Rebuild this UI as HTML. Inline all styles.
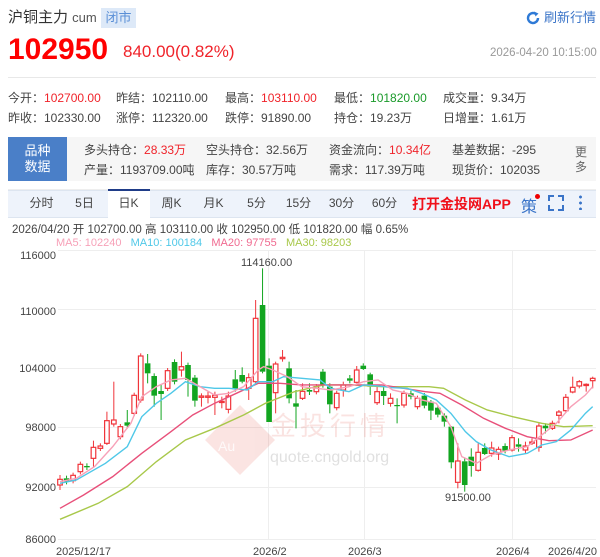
<!DOCTYPE html>
<html><head><meta charset="utf-8"><style>
*{margin:0;padding:0;box-sizing:border-box}
body{width:600px;height:557px;overflow:hidden;background:#fff;font-family:"Liberation Sans","Noto Sans CJK SC",sans-serif;color:#333;position:relative}
.a{position:absolute;white-space:nowrap}
.r{color:#f0232a}.g{color:#1a9a2a}
.s{font-size:12px;color:#444;line-height:14px}
.tab{position:absolute;top:190px;height:27px;line-height:27px;font-size:12px;color:#444;text-align:center;width:43px}
</style></head><body>
<div class="a" style="left:8px;top:9px;font-size:15px;color:#333;line-height:18px">沪铜主力 <span style="font-size:13px;color:#555">cum</span></div>
<div class="a" style="left:101px;top:8px;width:35px;height:20px;background:#dde9f8;color:#5a8fd6;font-size:13px;line-height:20px;text-align:center">闭市</div>
<svg class="a" style="left:526px;top:11px" width="14" height="14" viewBox="0 0 14 14"><path d="M12 7A5 5 0 1 1 9.5 2.7" fill="none" stroke="#2f7ad6" stroke-width="2.4"/><path d="M8 0.5L12.5 2.5 9.5 5.5Z" fill="#2f7ad6"/></svg>
<div class="a" style="left:544px;top:10px;font-size:13px;color:#3a74c8;line-height:16px">刷新行情</div>
<div class="a r" style="left:8px;top:33px;font-size:30px;line-height:34px;font-weight:bold;color:#f00">102950</div>
<div class="a r" style="left:123px;top:42px;font-size:17px;line-height:20px">840.00(0.82%)</div>
<div class="a" style="left:490px;top:46px;font-size:11.5px;line-height:14px;color:#999">2026-04-20 10:15:00</div>
<div class="a" style="left:8px;top:77px;width:588px;height:1px;background:#e8e8e8"></div>
<div class="a s" style="left:8px;top:91px">今开：<span class="r">102700.00</span></div>
<div class="a s" style="left:116px;top:91px">昨结：102110.00</div>
<div class="a s" style="left:225px;top:91px">最高：<span class="r">103110.00</span></div>
<div class="a s" style="left:334px;top:91px">最低：<span class="g">101820.00</span></div>
<div class="a s" style="left:443px;top:91px">成交量：9.34万</div>
<div class="a s" style="left:8px;top:111px">昨收：102330.00</div>
<div class="a s" style="left:116px;top:111px">涨停：112320.00</div>
<div class="a s" style="left:225px;top:111px">跌停：91890.00</div>
<div class="a s" style="left:334px;top:111px">持仓：19.23万</div>
<div class="a s" style="left:443px;top:111px">日增量：1.61万</div>
<div class="a" style="left:8px;top:137px;width:588px;height:44px;background:#f6f6f6"></div>
<div class="a" style="left:8px;top:137px;width:59px;height:44px;background:#4a7fc8;color:#fff;font-size:13px;text-align:center;line-height:16px;padding-top:6px;white-space:normal">品种<br>数据</div>
<div class="a s" style="left:84px;top:143px">多头持仓：<span class="r">28.33万</span></div>
<div class="a s" style="left:206px;top:143px">空头持仓：32.56万</div>
<div class="a s" style="left:329px;top:143px">资金流向：<span class="r">10.34亿</span></div>
<div class="a s" style="left:452px;top:143px">基差数据：-295</div>
<div class="a s" style="left:84px;top:163px">产量：1193709.00吨</div>
<div class="a s" style="left:206px;top:163px">库存：30.57万吨</div>
<div class="a s" style="left:329px;top:163px">需求：117.39万吨</div>
<div class="a s" style="left:452px;top:163px">现货价：102035</div>
<div class="a s" style="left:575px;top:145px;width:12px;white-space:normal;line-height:15px;color:#666">更多</div>
<div class="a" style="left:8px;top:189px;width:588px;height:1px;background:#eee"></div>
<div class="a" style="left:8px;top:190px;width:588px;height:28px;background:#eef3fb;border-top:1px solid #dde5f0;border-bottom:1px solid #dde5f0"></div>
<div class="a" style="left:108px;top:189px;width:42px;height:29px;background:#fff;border-top:2px solid #1f3c88"></div>
<div class="tab" style="left:20px">分时</div><div class="tab" style="left:63px">5日</div><div class="tab" style="left:107px">日K</div><div class="tab" style="left:150px">周K</div><div class="tab" style="left:192px">月K</div><div class="tab" style="left:235px">5分</div><div class="tab" style="left:277px">15分</div><div class="tab" style="left:320px">30分</div><div class="tab" style="left:363px">60分</div>
<div class="a" style="left:412px;top:194px;font-size:14px;font-weight:bold;color:#f0101a">打开金投网APP</div>
<div class="a" style="left:521px;top:193px;font-size:16px;color:#3a74c8">策</div>
<div class="a" style="left:535px;top:194px;width:5px;height:5px;border-radius:50%;background:#e00"></div>
<svg class="a" style="left:548px;top:195px" width="16" height="16" viewBox="0 0 16 16" fill="none" stroke="#3a74c8" stroke-width="2"><path d="M1 6V1H6M10 1H15V6M15 10V15H10M6 15H1V10"/></svg>
<div class="a" style="left:579px;top:194px;width:3px;height:16px;background:radial-gradient(circle,#3a74c8 1.3px,transparent 1.6px) 0 0/3px 6px repeat-y"></div>
<div class="a" style="left:12px;top:223px;font-size:11.5px;line-height:14px;color:#444">2026/04/20 开 102700.00 高 103110.00 收 102950.00 低 101820.00 幅 0.65%</div>
<div class="a" style="left:56px;top:237px;font-size:11px;line-height:13px"><span style="color:#f7a1b8">MA5: 102240</span>&nbsp;&nbsp;&nbsp;<span style="color:#4fc8e8">MA10: 100184</span>&nbsp;&nbsp;&nbsp;<span style="color:#f06a90">MA20: 97755</span>&nbsp;&nbsp;&nbsp;<span style="color:#a8c84a">MA30: 98203</span></div>
<svg class="a" style="left:0;top:0" width="600" height="557" id="ch">
<g stroke="#eee" stroke-width="1">
<line x1="58" y1="250.5" x2="596" y2="250.5"/><line x1="58" y1="309.5" x2="596" y2="309.5"/><line x1="58" y1="368.5" x2="596" y2="368.5"/><line x1="58" y1="427.5" x2="596" y2="427.5"/><line x1="58" y1="487.5" x2="596" y2="487.5"/><line x1="58" y1="539.5" x2="596" y2="539.5"/>
<line x1="268.5" y1="250" x2="268.5" y2="540"/><line x1="364.5" y1="250" x2="364.5" y2="540"/><line x1="512.5" y1="250" x2="512.5" y2="540"/>
</g>
<g opacity="0.13" fill="#e03020">
<path d="M240 405L275 440 240 475 205 440Z"/>
<text x="270" y="435" font-size="26" font-family="Noto Sans CJK SC,sans-serif" letter-spacing="4">金投行情</text>
</g>
<text x="218" y="451" font-size="14" fill="#fff" opacity="0.8">Au</text>
<text x="270" y="462" font-size="16" fill="#ccc" opacity="0.6">quote.cngold.org</text>
<g font-size="11" fill="#444" text-anchor="end">
<text x="56" y="259">116000</text><text x="56" y="315">110000</text><text x="56" y="372">104000</text><text x="56" y="431">98000</text><text x="56" y="491">92000</text><text x="56" y="543">86000</text>
</g>
<g font-size="11" fill="#444">
<text x="56" y="555">2025/12/17</text><text x="253" y="555">2026/2</text><text x="348" y="555">2026/3</text><text x="496" y="555">2026/4</text><text x="548" y="555">2026/4/20</text>
<text x="241" y="266">114160.00</text><text x="445" y="501">91500.00</text>
</g>
<g id="k"></g>
<g transform="translate(40,250) scale(0.3636,0.3333)" fill="none" stroke-width="1.4">
<polyline vector-effect="non-scaling-stroke" stroke="#a8c84a" points="55,808 160,760 240,710 320,635 400,570 480,535 560,495 620,460 700,425 780,405 860,405 940,410 1000,410 1070,410 1110,415 1170,450 1230,480 1300,500 1380,520 1440,530 1520,527"/>
<polyline vector-effect="non-scaling-stroke" stroke="#e8507a" points="55,775 120,735 200,680 280,610 360,545 420,495 480,460 540,430 600,400 660,400 720,405 800,405 880,405 940,405 1000,415 1060,425 1100,430 1160,465 1220,505 1280,535 1340,560 1400,572 1460,570 1520,540"/>
<polyline vector-effect="non-scaling-stroke" stroke="#4fc8e8" points="55,700 100,690 180,640 240,590 280,500 320,460 360,430 400,395 440,410 480,415 520,415 570,420 600,395 640,395 670,380 720,385 770,390 800,415 850,425 890,405 930,408 970,413 1010,415 1050,430 1090,450 1130,490 1170,545 1200,575 1240,600 1290,620 1340,610 1380,585 1420,575 1460,540 1500,490 1520,470"/>
<polyline vector-effect="non-scaling-stroke" stroke="#f7a1b8" points="55,695 100,685 150,650 200,590 250,520 280,440 320,410 360,390 400,385 440,410 480,435 520,430 560,410 600,360 615,350 640,360 680,380 720,410 760,415 800,420 850,410 890,395 930,390 970,420 1010,430 1050,450 1090,460 1130,530 1160,620 1200,640 1240,615 1290,600 1340,590 1380,555 1420,520 1460,470 1500,435 1520,410"/>
</g>
</svg>
<script>
var d=[[55,'r',688,705,675,720],[73,'g',685,695],[91,'r',676,692],[111,'r',643,665],[129,'g',648,652],[147,'r',592,625,572,650],[166,'r',588,595],[184,'r',512,580,485,585],[203,'r',510,522,395,530],[221,'r',530,560],[240,'g',517,527,480,535],[259,'r',436,490],[277,'r',318,450],[296,'g',340,370,312,400],[314,'g',378,437,370,470],[333,'g',423,432,405,510],[351,'r',362,415],[370,'g',336,395],[389,'r',350,360,305,380],[407,'g',345,390,338,440],[426,'g',383,452,375,470],[444,'r',438,442,430,470],[462,'r',438,442,425,460],[481,'r',436,442,425,495],[500,'r',454,457,440,475],[518,'r',438,478,425,490],[537,'g',388,418,360,425],[556,'g',375,395,352,400],[574,'r',383,415,370,450],[593,'r',205,395,150,400],[612,'g',165,365,55,370],[630,'g',347,516,325,516],[648,'r',342,428,335,490],[667,'r',322,326,300,335],[685,'g',355,445,335,460],[704,'g',460,470,420,535],[722,'r',424,445,400,450],[741,'g',420,425,400,435],[760,'r',410,425],[778,'g',365,405],[797,'g',410,463,400,490],[816,'r',430,473],[834,'r',405,420,395,440],[852,'g',385,392,375,400],[871,'r',360,397,348,400],[889,'g',347,357,340,360],[908,'g',373,410,368,435],[927,'r',425,458,410,465],[945,'g',423,438,410,465],[964,'r',445,460,430,470],[982,'g',465,467,445,520],[1001,'r',430,465],[1020,'g',430,440],[1038,'r',445,470],[1057,'g',437,467],[1075,'g',455,482,450,510],[1094,'g',473,494],[1112,'g',497,515,490,530],[1131,'g',530,637,528,655],[1149,'r',633,697,580,715],[1168,'g',634,705,625,725],[1186,'g',620,648,595,680],[1205,'r',607,661,580,665],[1223,'g',594,612,580,615],[1242,'r',594,610,575,620],[1261,'r',598,612,590,630],[1279,'g',588,602],[1298,'r',563,600,555,605],[1316,'g',583,590,565,605],[1335,'r',588,600,575,610],[1353,'r',576,578,565,585],[1372,'r',528,592,520,605],[1390,'g',527,535,520,550],[1409,'r',520,535,512,540],[1427,'r',486,496,480,520],[1446,'r',442,482,432,488],[1465,'r',412,426,380,430],[1483,'r',395,408,390,415],[1502,'r',403,405,400,425],[1520,'r',385,392,380,415]];
var s='';d.forEach(function(c){var x=40+c[0]/2.75,t=250+c[2]/3,b=250+c[3]/3,h=250+(c[4]!==undefined?c[4]:c[2]-8)/3,l=250+(c[5]!==undefined?c[5]:c[3]+8)/3;var col=c[1]=='r'?'#f0343a':'#12a520';
s+='<line x1="'+x+'" y1="'+h+'" x2="'+x+'" y2="'+t+'" stroke="'+col+'"/><line x1="'+x+'" y1="'+b+'" x2="'+x+'" y2="'+l+'" stroke="'+col+'"/>';
var hh=Math.max(b-t,1.2);
if(c[1]=='r')s+='<rect x="'+(x-2.3)+'" y="'+t+'" width="4.6" height="'+hh+'" fill="#fff" stroke="'+col+'" stroke-width="1.2"/>';
else s+='<rect x="'+(x-2.8)+'" y="'+t+'" width="5.6" height="'+hh+'" fill="'+col+'"/>';});
document.getElementById('k').innerHTML=s;
</script>
</body></html>
